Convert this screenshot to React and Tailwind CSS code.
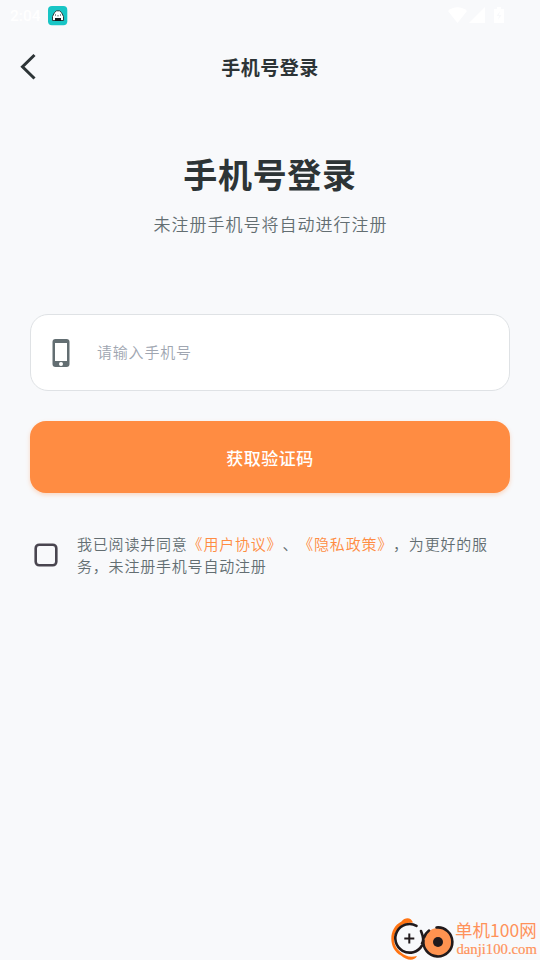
function StatusBar() {
  return (
    <div className="flex h-8 items-center justify-between pl-[10px] pr-[34px] text-white">
      <div className="flex items-center gap-[7px]">
        <span className="w-[31px] whitespace-nowrap font-['Roboto',sans-serif] text-[15.5px] font-medium leading-8">2:04</span>
        <svg width="20" height="20" viewBox="0 0 20 20">
          <rect width="19.3" height="19.3" rx="4" fill="#18c5c5" />
          <path d="M4.500 14.500V10.500L6.500 6.500L8.500 4.800H11.500L13.500 6.500L15.500 10.500V14.500Z" fill="#fff" stroke="#222b2d" strokeWidth="0.9" />
          <path d="M7 12H13V15H7Z" fill="#151b1d" />
          <path d="M7 9h1M12 9h1M9.500 9.800h1" stroke="#222b2d" strokeWidth="1" />
        </svg>
      </div>
      <svg width="58" height="20" viewBox="0 0 58 20" fill="#fff">
        <path d="M0 5C5 0 14 0 19 5L9.5 17Z" />
        <path d="M21 17H37V1Z" />
        <path d="M46 3H49V1H53V3H56V17H46Z" />
        <path d="M52 5L48.500 10H51L50 14L53.500 9H51Z" fill="#f8f9fb" />
      </svg>
    </div>
  );
}

function Watermark() {
  return (
    <div className="absolute bottom-0 right-0 flex h-[44px] w-[151px] items-start text-[#ff925a]">
      <svg width="66" height="44" viewBox="0 0 66 44" fill="none" className="shrink-0">
        <path d="M24 6.500C22 1 16 1 12.500 5.500C-1 12 -1 33 12 39.500C17 44 25 46 28 40C21 42 16 40 12 36.500C2 29 3 16 13 9C17 6.500 20 7 24 6.500Z" fill="#ff7413" />
        <path d="M27.500 9.800A14.300 14.300 0 1 0 33 29.500" stroke="#211a1c" strokeWidth="2.600" strokeLinecap="round" />
        <path d="M20.300 17.500V27.500M15.300 22.500H25.300" stroke="#211a1c" strokeWidth="2" />
        <circle cx="49" cy="26" r="14" fill="#ff9350" />
        <path d="M47.500 11.500A14.500 14.500 0 1 1 34.500 24M33 27.500C36 23 33 18 32 15M35 21.500C36 18.500 38 16 40 14.500" stroke="#211a1c" strokeWidth="2.600" strokeLinecap="round" />
        <circle cx="49" cy="26" r="5" fill="#211a1c" />
      </svg>
      <div className="flex flex-col whitespace-nowrap">
        <span className="h-[25px] text-[17.5px] leading-[27px]">单机100网</span>
        <span className="pl-[1.5px] font-['Liberation_Serif',serif] text-[14.7px] leading-[16px] [-webkit-text-stroke:0.2px_#ff925a]">danji100.com</span>
      </div>
    </div>
  );
}

export default function App() {
  return (
    <div className="relative h-[960px] w-[540px] overflow-hidden bg-[#f8f9fb] font-['Noto_Sans_CJK_SC',sans-serif] text-[#2d3436]">
      <StatusBar />
      <header className="grid h-[70px] grid-cols-[60px_1fr_60px] items-center">
        <svg width="60" height="30" viewBox="0 0 60 30" fill="none" stroke="#2d3436" strokeWidth="3">
          <path d="M34.500 3L22.500 14.800L34.500 26.500" />
        </svg>
        <h1 className="text-center text-[19px] font-bold leading-7 tracking-[0.5px]">手机号登录</h1>
      </header>
      <main className="px-[30px] pt-[47px]">
        <h2 className="text-center text-[34px] font-bold leading-[50px] tracking-[0.7px]">手机号登录</h2>
        <p className="mt-[13px] pl-px text-center text-[17px] font-[350] leading-[24px] tracking-[1px] text-[#636e72]">未注册手机号将自动进行注册</p>
        <div className="mt-[78px] flex h-[77px] items-center rounded-[18px] border-[1.5px] border-[#dfe2e5] bg-white pl-[21px]">
          <svg width="18" height="28" viewBox="0 0 18 28" className="shrink-0">
            <rect x="0.500" width="17" height="28" rx="3" fill="#636e72" />
            <path d="M3 4H15V22H3Z" fill="#fff" />
            <circle cx="9" cy="25" r="2" fill="#fff" />
          </svg>
          <span className="ml-[27px] text-[15px] font-[350] tracking-[0.8px] text-[#a0a6b1]">请输入手机号</span>
        </div>
        <button className="mt-[30px] block h-[71.500px] w-full rounded-[16px] bg-[#ff8c42] pt-[2px] text-[17px] font-medium tracking-[0.5px] text-white shadow-[0_2px_4px_rgba(255,140,66,0.3)]">获取验证码</button>
        <div className="mt-[40.5px] flex items-center pl-[4px]">
          <svg width="24" height="24" viewBox="0 0 24 24" fill="none" className="shrink-0">
            <rect x="1.700" y="1.700" width="20.600" height="20.600" rx="3.500" stroke="#49454f" strokeWidth="2.600" />
          </svg>
          <p className="ml-[19px] whitespace-nowrap text-[15px] font-[350] leading-[22px] tracking-[0.8px] text-[#636e72] [text-spacing-trim:space-all]">
            我已阅读并同意<span className="text-[#ff8c42]">《用户协议》</span>、<span className="text-[#ff8c42]">《隐私政策》</span>，为更好的服<br />务，未注册手机号自动注册
          </p>
        </div>
      </main>
      <Watermark />
    </div>
  );
}
